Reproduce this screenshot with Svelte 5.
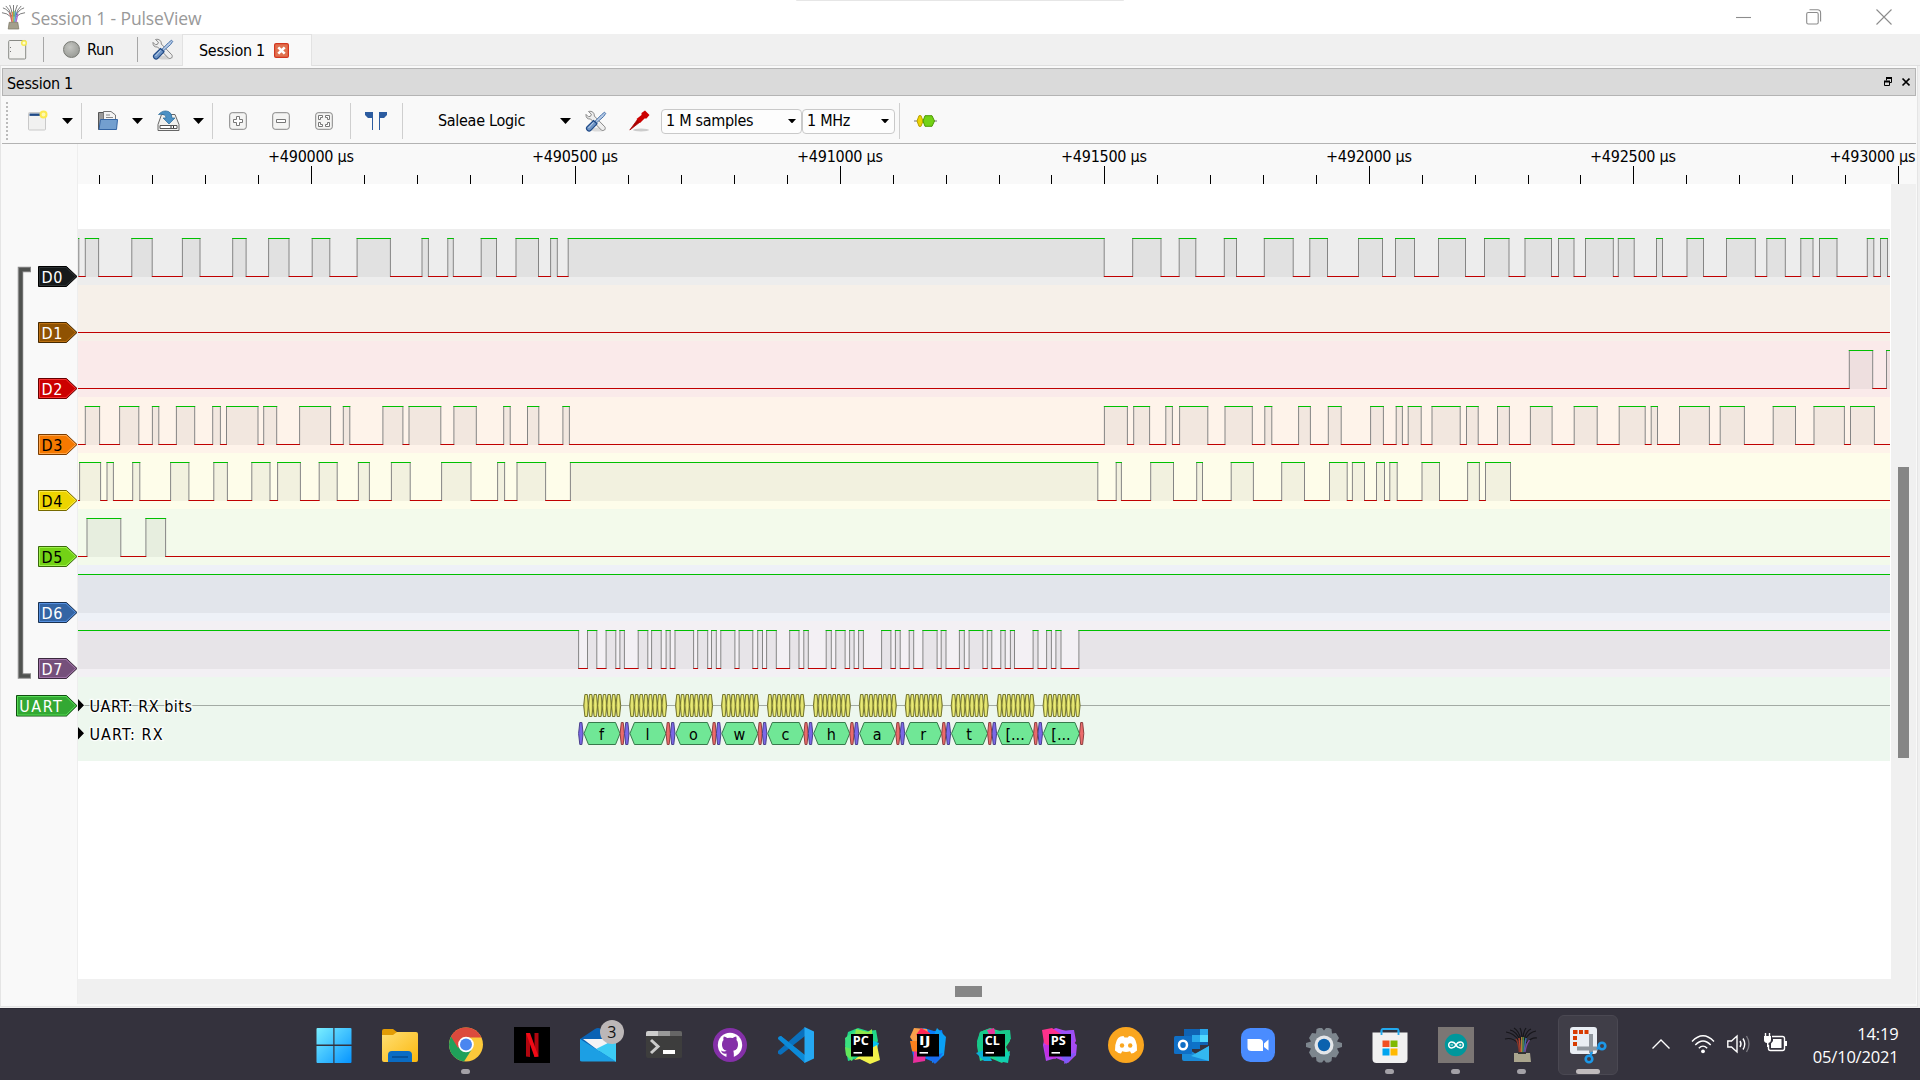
<script>
  // Ruler
  const majors = [0, 1, 2, 3, 4, 5, 6].map((i) => ({
    x: Math.min(Math.floor(311.3 + i * 264.5), 1872.5),
    label: `+${490000 + i * 500} µs`
  }));
  const ticks = Array.from({ length: 35 }, (_, i) => i - 4).map((i) => ({
    x: Math.floor(311.3 + i * 52.9) + 0.5,
    major: i % 5 === 0
  }));

  const END = 1890;

  // Every pair in `high` is a span in which the line is high
  const channels = [
    { name: 'D0', bg: '#ededed', tag: '#16191a', edge: '#000000', light: '#33393b', text: '#fff', high: [[70, 78.8], [85.3, 98.6], [131.8, 152.2], [182.4, 200], [232.7, 246.1], [268.6, 289], [312.2, 329.8], [357.1, 390.4], [422, 428.4], [447.8, 453.3], [481.2, 496.5], [516, 538.5], [550.6, 557.3], [568.2, 1104.2], [1132.7, 1161], [1179.2, 1195.8], [1224.3, 1236.5], [1264.3, 1293.2], [1309.8, 1327.5], [1358.5, 1382.5], [1395.5, 1414.5], [1438.5, 1465.5], [1484.5, 1509], [1525, 1551.5], [1558.5, 1574], [1585.5, 1613.3], [1618.3, 1634.2], [1656.5, 1662.5], [1687, 1703.5], [1726.5, 1755.3], [1766.8, 1785.3], [1800.8, 1813], [1819.5, 1837], [1867.3, 1873.8], [1880.5, 1887.5]] },
    { name: 'D1', bg: '#f6f0e9', tag: '#8f5202', edge: '#472900', light: '#c87a18', text: '#fff', high: [] },
    { name: 'D2', bg: '#faeaea', tag: '#cc0000', edge: '#660000', light: '#ff4040', text: '#fff', high: [[1849.3, 1872.7], [1886.5, 1900]] },
    { name: 'D3', bg: '#fef3ea', tag: '#f57900', edge: '#7a3c00', light: '#ffb060', text: '#000', high: [[85.3, 99.6], [119.6, 138.8], [152.4, 158.8], [176.4, 194.7], [212.7, 220.4], [226.5, 258], [263.7, 276.7], [299.6, 330.6], [343.3, 349.8], [382.9, 402.9], [409, 440.8], [453.9, 476.3], [503.7, 510.2], [527.5, 538.8], [562.9, 569.4], [1104.4, 1127.4], [1133.7, 1149.6], [1165.8, 1172.4], [1179.6, 1207.8], [1225, 1252.3], [1264.8, 1271.8], [1298.6, 1310.4], [1328.3, 1341.2], [1370.6, 1383.4], [1396.2, 1402.4], [1408.2, 1421.2], [1432, 1460.2], [1466.5, 1478.2], [1497.5, 1509.4], [1530.4, 1552.1], [1574.2, 1597.2], [1619.2, 1645.2], [1651.2, 1657.5], [1679.5, 1709.4], [1720.2, 1744.4], [1773.2, 1795.5], [1814, 1844.4], [1850.5, 1874.4]] },
    { name: 'D4', bg: '#fefdea', tag: '#edd400', edge: '#766a00', light: '#fff05a', text: '#000', high: [[79.6, 100.6], [107, 113.4], [132.7, 139.8], [170.6, 188.9], [213.8, 227.4], [251.8, 270], [277.6, 300.4], [319.2, 337.2], [358.4, 369.4], [391.4, 410.2], [441.6, 471], [497.6, 504.6], [517, 545.6], [570.4, 1097.8], [1116.2, 1121.4], [1150.7, 1173.5], [1196.7, 1202.5], [1231.2, 1253.4], [1281.7, 1304.5], [1329.5, 1347.2], [1352.4, 1364.5], [1376.5, 1384.5], [1389.8, 1397.2], [1422, 1439.5], [1467.6, 1479.4], [1485.5, 1510.5]] },
    { name: 'D5', bg: '#f3faeb', tag: '#73d216', edge: '#39690b', light: '#a8f85a', text: '#000', high: [[87, 120.8], [145.9, 165.6]] },
    { name: 'D6', bg: '#eef1f7', tag: '#3465a4', edge: '#1a3252', light: '#5e9cf0', text: '#fff', high: [[70, 1900]] },
    { name: 'D7', bg: '#f3f0f4', tag: '#75507b', edge: '#3a283d', light: '#ae80b6', text: '#fff', high: [[70, 578.6], [587.5, 596.8], [606.1, 615.8], [619.9, 624.4], [638.2, 647.8], [651.6, 661.2], [666.1, 670.2], [675, 693.6], [697.7, 707.7], [711.5, 716.3], [720.8, 734.9], [739.1, 752.8], [757.7, 762.5], [766.6, 776.3], [789.7, 799], [803.8, 808.3], [826.2, 831.3], [835.8, 845.1], [849.6, 854.1], [858.6, 863.4], [881.6, 890.9], [895.4, 900.2], [909.2, 913.7], [922.9, 937.1], [941.2, 946], [959.4, 964.3], [969.1, 982.9], [987.3, 991.8], [1000.8, 1005.2], [1010.4, 1014.5], [1033.1, 1038], [1046.6, 1051.4], [1055.9, 1061], [1078.9, 1900]] }
  ].map((c, i) => {
    const top = 229 + i * 56;
    const low = [];
    let x = 78;
    for (const [a, b] of c.high) {
      if (a > x) low.push([x, a]);
      x = b;
    }
    if (x < END) low.push([x, END]);
    return { ...c, top, low };
  });

  const frames = ['f', 'l', 'o', 'w', 'c', 'h', 'a', 'r', 't', '[...', '[...'].map((t, i) => ({ t, x: 583.4 + i * 45.94 }));
  const bits = [0, 1, 2, 3, 4, 5, 6, 7];

  function hex(x, y, w, h, c) {
    return `${x},${y + h / 2} ${x + c},${y} ${x + w - c},${y} ${x + w},${y + h / 2} ${x + w - c},${y + h} ${x + c},${y + h}`;
  }

  const apps = ['start', 'files', 'chrome', 'netflix', 'mail', 'terminal', 'github', 'vscode', 'pycharm', 'idea', 'clion', 'phpstorm', 'discord', 'outlook', 'zoom', 'settings', 'store', 'arduino', 'pulseview', 'snip'];
  const running = ['chrome', 'store', 'arduino', 'pulseview'];
  const ides = {
    pycharm: { t: 'PC', w: 16, base: '#21d789', polys: [['1,11 13,2 20,10 8,34 2,28', '#3be080'], ['12,2 24,5 28,2 28,14 10,14', '#8ee84a'], ['24,12 35,16 32,24 24,24', '#07c3f2'], ['10,33 22,24 33,18 36,33 26,37 16,32', '#f2f24a'], ['1,20 8,22 8,34 2,28', '#62e65a']] },
    idea: { t: 'IJ', w: 12, base: '#087cfa', polys: [['4,1 17,2 20,12 4,16 0,10', '#f9a04a'], ['11,1 20,6 20,14 6,8', '#fe2857'], ['27,1 36,10 34,28 22,36 24,8', '#0aa0f5'], ['0,14 8,14 14,30 2,24', '#fc801d'], ['4,24 16,27 15,34 3,36', '#e82e9c'], ['18,30 33,26 25,37', '#1b6cf0']] },
    clion: { t: 'CL', w: 15, base: '#21d789', polys: [['1,14 4,5 12,2 12,20 2,26', '#16c98a'], ['11,3 18,1 20,8 14,10', '#e8389c'], ['20,4 34,3 35,12 27,18 18,8', '#18c98c'], ['0,26 10,22 16,34 8,34', '#0ab0d8'], ['18,30 34,24 32,36 22,34', '#10d0b0']] },
    phpstorm: { t: 'PS', w: 15, base: '#b345f1', polys: [['0,3 10,1 20,8 10,22 2,16', '#ff318c'], ['18,4 32,3 32,14 24,14', '#9a50f5'], ['28,12 35,18 34,28 22,37 26,16', '#a64cf5'], ['2,18 10,18 14,32 4,30', '#c030e0'], ['18,28 34,26 24,37', '#7a5cf8']] }
  };
</script>

{#snippet tools()}
  <svg width="22" height="22" viewBox="0 0 22 22">
    <ellipse cx="13" cy="19.5" rx="8" ry="2" fill="#000" opacity=".12" />
    <path d="M3.5 1.5 6.4 4.2 5.6 6.2 3.4 6.8 1 4.4C.8 7.600 2.400 9.300 5.600 9L16.500 20.200C18.500 21.400 21.400 19 19.800 16.800L9.300 6C9.600 2.800 7 .6 3.500 1.500Z" fill="#eee" stroke="#888" />
    <path d="M19.500 2.200 20.700 3.400 18.600 6.500 11.800 12.600 10.200 11.100 16.500 4.700Z" fill="#b8cbe6" stroke="#3465a4" stroke-width=".9" />
    <path d="M8.500 10.500 12 13.800 5.800 20.300C3.500 22.300.2 19.200 2 16.800Z" fill="#6f95c6" stroke="#204a87" stroke-width="1.200" />
    <path d="M8.500 12.500 3.500 18" stroke="#c5d6ec" stroke-width="1" />
  </svg>
{/snippet}

{#snippet arrow(big)}
  <svg class={big ? 'arrow' : 'arrow small'} viewBox="0 0 11 6"><path d="M0 0H11L5.500 6Z" /></svg>
{/snippet}

{#snippet probe()}
  <svg width="26" height="26" viewBox="0 0 26 26">
    <g fill="none" stroke="#555" stroke-width=".8">
      <path d="M11 12Q8 5 2 3M11 12Q9 4 5 1M12 12Q11 4 9 0M13 12V0M14 12Q15 4 17 0M15 12Q17 4 21 1M15 12Q18 5 24 3M11 13Q6 8 1 8M15 13Q20 8 25 8" />
    </g>
    <g fill="none" stroke-width="1.400">
      <path d="M11.500 18Q10.500 12 9 8" stroke="#c66" /><path d="M12.500 18 12 7" stroke="#e84" />
      <path d="M13.500 18V6" stroke="#6b6" /><path d="M14.500 18 15.500 7" stroke="#59d" /><path d="M15.500 18 17.500 9" stroke="#a6c" />
    </g>
    <path d="M8.500 18H17.500L18.500 25H7.500Z" fill="#a39f8c" stroke="#77735f" stroke-width=".7" />
  </svg>
{/snippet}

<div class="screen">
  <header class="titlebar">
    <span class="app-icon">{@render probe()}</span>
    <span class="title">Session 1 - PulseView</span>
    <div class="peek"></div>
    <div class="window-buttons">
      <svg width="16" height="16" viewBox="0 0 16 16"><path d="M0 8.500H15" /></svg>
      <svg width="16" height="16" viewBox="0 0 16 16"><rect x=".7" y="3.500" width="11.500" height="11.500" rx="1.500" /><path d="M3.500 .8H11.500Q14.600.8 14.600 4V12.500" /></svg>
      <svg width="16" height="16" viewBox="0 0 16 16"><path d="M.5.5 15.500 15.500M15.500.5.5 15.500" /></svg>
    </div>
  </header>

  <nav class="tabs">
    <svg class="new" width="20" height="22" viewBox="0 0 20 22"><rect x=".7" y="2.500" width="17" height="18.500" rx="1" fill="#f2f2f0" stroke="#888a85" /><path d="M2.500 9v1M2.500 13v1" stroke="#777" /><circle cx="16" cy="5" r="2.300" fill="#fffbd0" stroke="#f5ea50" stroke-width="1.500" /></svg>
    <i class="vline"></i>
    <div class="run"><i class="ball"></i><span>Run</span></div>
    <i class="vline second"></i>
    <span class="tool">{@render tools()}</span>
    <div class="tab">
      <span>Session 1</span>
      <svg width="15" height="15" viewBox="0 0 15 15"><rect x=".6" y=".6" width="13.800" height="13.800" rx="1.500" fill="#e0714f" stroke="#d4361e" stroke-width="1.200" /><path d="M4.300 4.300 10.700 10.700M10.700 4.300 4.300 10.700" stroke="#fff" stroke-width="2.600" /></svg>
    </div>
  </nav>

  <main class="body">
    <div class="dock">
      <span>Session 1</span>
      <svg width="26" height="10" viewBox="0 0 26 10">
        <path d="M2.500 3.500V1H7.500V5.500H5.500M.5 4.500H5.500V8.500H.5Z" fill="none" stroke="#000" /><path d="M2 1H8M0 4.500H6" stroke="#000" stroke-width="2" />
        <path d="M18.500 1.500 25.500 8.500M25.500 1.500 18.500 8.500" stroke="#000" stroke-width="1.700" />
      </svg>
    </div>

    <div class="toolbar">
      <i class="grip"></i>
      <svg class="i-new" width="20" height="22" viewBox="0 0 20 22"><rect x=".5" y="2.500" width="17" height="17.500" rx="1" fill="#f1f1f0" stroke="#c9c9c9" /><path d="M1.500 4.700H14" stroke="#204a87" stroke-width="2.400" /><circle cx="15.500" cy="4.500" r="3" fill="#fff9b0" stroke="#fce94f" stroke-width="2" /></svg>
      {@render arrow(true)}
      <i class="sep"></i>
      <svg class="i-open" width="22" height="22" viewBox="0 0 22 22"><path d="M1.500 2.500H8V19.500H1.500Z" fill="#999" stroke="#555" /><path d="M6.500 12V1.500H14L18.500 5V12Z" fill="#f4f4f4" stroke="#777" /><path d="M9 5H13M9 7.500H16" stroke="#888" /><path d="M3.500 9.500H20.500L19.500 19.500H2Z" fill="#739fcf" stroke="#3465a4" /></svg>
      {@render arrow(true)}
      <svg class="i-save" width="23" height="22" viewBox="0 0 23 22"><path d="M4.500 4.500H18L22 14.500V20.500H1V14.500Z" fill="#f0f0ee" stroke="#666" /><path d="M3 15.500H20V18.500H3Z" fill="#fff" stroke="#555" /><path d="M14 16V18M16.500 16V18" stroke="#333" /><path d="M1.500 4.500Q6-.500 11.500 1.500 15 3 15 8H18L12 14 6 8H9Q9 3.500 1.500 4.500Z" fill="#4a90c4" stroke="#2a6a9a" stroke-width=".7" /></svg>
      {@render arrow(true)}
      <i class="sep"></i>
      <svg class="zoomer" viewBox="0 0 18 18"><rect class="key" x=".7" y=".7" width="16.600" height="16.600" rx="2.500" /><path d="M7.500 4.500H10.500V7.500H13.500V10.500H10.500V13.500H7.500V10.500H4.500V7.500H7.500Z" /></svg>
      <svg class="zoomer" viewBox="0 0 18 18"><rect class="key" x=".7" y=".7" width="16.600" height="16.600" rx="2.500" /><path d="M4.500 7.500H13.500V10.500H4.500Z" /></svg>
      <svg class="zoomer" viewBox="0 0 18 18"><rect class="key" x=".7" y=".7" width="16.600" height="16.600" rx="2.500" /><path d="M3.500 7.500V3.500H7.500V5.500H5.500V7.500ZM14.500 7.500V3.500H10.500V5.500H12.500V7.500ZM3.500 10.500V14.500H7.500V12.500H5.500V10.500ZM14.500 10.500V14.500H10.500V12.500H12.500V10.500Z" /></svg>
      <i class="sep after-zoom"></i>
      <svg class="flags" width="22" height="18" viewBox="0 0 22 18"><path d="M0 0H8V18H7V6H3L0 3Z M14 0H22V3L19 6H15V18H14Z" fill="#2c5ca0" /></svg>
      <i class="sep after-flags"></i>
      <span class="device">Saleae Logic</span>
      {@render arrow(true)}
      <span class="tool t2">{@render tools()}</span>
      <svg class="probe" width="21" height="22" viewBox="0 0 21 22"><ellipse cx="12" cy="20" rx="8" ry="1.500" fill="#ccc" /><path d="M.8 20 8.500 9.500 11 12Z" fill="#a00" stroke="#a00" stroke-width=".8" /><path d="M7.500 9 12.500 5 12.500 3 16 .5 20.500 5 17.500 8.500H15.500L11 13Z" fill="#c00" /></svg>
      <div class="combo samples"><span>1 M samples</span>{@render arrow(false)}</div>
      <div class="combo rate"><span>1 MHz</span>{@render arrow(false)}</div>
      <i class="sep after-rate"></i>
      <svg class="decoder" width="23" height="12" viewBox="0 0 23 12"><path d="M0 6H23" stroke="#777" /><path d="M3 6 5 .7H7L9 6 7 11.300H5Z" fill="#edd400" stroke="#b8a000" /><path d="M9 6 11 .7H18L20.500 6 18 11.300H11Z" fill="#73d216" stroke="#4e9a06" /></svg>
    </div>

    <div class="view">
      <svg class="headers" width="76" height="860" viewBox="2 144 76 860">
        <path d="M31 269.500H20.500V676H31" fill="none" stroke="#8a8a8a" stroke-width="5.500" />
        <path d="M30 269.500H20.800V676H30" fill="none" stroke="#505250" stroke-width="3.400" />
        {#each channels as c}
          <path d="M38.500 {c.top + 37.500}H66.500L77 {c.top + 47.500} 66.500 {c.top + 57.500}H38.500Z" fill={c.tag} stroke={c.edge} />
          <path d="M39.500 {c.top + 38.500}H66L75.500 {c.top + 47.500} 66 {c.top + 56.500}H39.500Z" fill="none" stroke={c.light} stroke-width=".8" />
          <text x="41.500" y={c.top + 53.500} fill={c.text} textLength="21">{c.name}</text>
        {/each}
        <path d="M16.500 695.500H66.500L77 705.700 66.500 716H16.500Z" fill="#33a833" stroke="#105010" />
        <path d="M17.500 696.500H66L75.500 705.700 66 715H17.500Z" fill="none" stroke="#60e860" stroke-width=".8" />
        <text x="19.300" y="711.500" fill="#fff" textLength="42.500">UART</text>
      </svg>

      <div class="right">
        <svg class="ruler" width="1838" height="40" viewBox="78 144 1838 40">
          {#each majors as m}<text x={m.x} y="162" text-anchor="middle" textLength="86">{m.label}</text>{/each}
          {#each ticks as t}<path d="M{t.x} {t.major ? 166 : 175}V184" stroke="#000" />{/each}
        </svg>
        <div class="scroll-area">
          <svg class="canvas" width="1813" height="795" viewBox="78 184 1813 795">
            <defs>
              <linearGradient id="bit" x1="0" x2="1"><stop offset="0" stop-color="#b5b64e" /><stop offset=".5" stop-color="#f0f17a" /><stop offset="1" stop-color="#b5b64e" /></linearGradient>
            </defs>
            {#each channels as c}
              <rect x="78" y={c.top} width="1812" height="56" fill={c.bg} />
              {#each c.high as [a, b]}
                <rect x={a} y={c.top + 9} width={Math.min(b, END) - a} height="39" fill="#000" opacity=".048" />
                {#if a > 78}<path class="edge" d="M{a} {c.top + 9}V{c.top + 48}" />{/if}
                {#if b < END}<path class="edge" d="M{b} {c.top + 9}V{c.top + 48}" />{/if}
              {/each}
              {#each c.high as [a, b]}
                <path d="M{a - 0.500} {c.top + 9.500}H{Math.min(b + 0.500, END)}" stroke="#00c000" />
              {/each}
              {#each c.low as [a, b]}
                <path d="M{a - 0.300} {c.top + 47.500}H{Math.min(b + 0.300, END)}" stroke="#c00000" />
              {/each}
            {/each}

            <rect x="78" y="677" width="1812" height="84" fill="#edf7ee" />
            <path d="M78 705.500H1890" stroke="#a3aba4" />
            {#each frames as f}
              {#each bits as b}
                <polygon points={hex(f.x + 0.300 + b * 4.600, 694.500, 4.800, 22, 1.200)} fill="url(#bit)" stroke="#74752f" />
              {/each}
              <polygon points={hex(f.x - 4.800, 722.500, 4.500, 22, 1.200)} fill="#7b68e8" stroke="#4a408c" />
              <polygon points={hex(f.x + 0.600, 722.500, 36, 22, 4.500)} fill="#70e796" stroke="#387a4c" />
              <polygon points={hex(f.x + 36.700, 722.500, 4.300, 22, 1.200)} fill="#ec6b6b" stroke="#8c4040" />
              <text x={f.x + 18.200} y="739.500" text-anchor="middle">{f.t}</text>
            {/each}
            <path d="M78 699 84 705.300 78 711.500ZM78 727 84 733.300 78 739.500Z" fill="#000" stroke="#fff" stroke-width="1" paint-order="stroke" />
            <text class="halo" x="89.500" y="711.500" textLength="102.500">UART: RX bits</text>
            <text class="halo" x="89.500" y="739.500" textLength="73">UART: RX</text>
          </svg>
          <div class="vbar"><i></i></div>
        </div>
        <div class="hbar"><i></i></div>
      </div>
    </div>
  </main>

  <footer class="taskbar">
    <div class="apps">
      {#each apps as a}
        <div class="app" class:active={a === 'snip'}>
          <svg width="36" height="36" viewBox="0 0 36 36">
            {#if a === 'start'}
              <defs><linearGradient id="win" gradientUnits="userSpaceOnUse" x1="0" y1="0" x2="36" y2="36"><stop offset="0" stop-color="#7df1ff" /><stop offset="1" stop-color="#0593ff" /></linearGradient></defs>
              <path d="M1.500 1H17.300V17.500H.5V2Q.5 1 1.500 1ZM18.500 1H34.500Q35.500 1 35.500 2V17.500H18.500ZM.5 19H17.300V36H1.500Q.5 36 .5 35ZM18.500 19H35.500V35Q35.500 36 34.500 36H18.500Z" fill="url(#win)" />
            {:else if a === 'files'}
              <defs><linearGradient id="fold" x2="1" y2="1"><stop offset="0" stop-color="#ffdf73" /><stop offset="1" stop-color="#fbb80f" /></linearGradient></defs>
              <path d="M0 4Q0 2 2 2H11L15 5V12H0Z" fill="#e29c05" /><path d="M0 8H11L15 5H34Q36 5 36 7V33Q36 35 34 35H2Q0 35 0 33Z" fill="url(#fold)" />
              <path d="M6 35V28Q6 24 10 24H26Q30 24 30 28V35Z" fill="#0a6cc4" /><path d="M10 30H26" stroke="#064a8c" stroke-width="1.500" />
            {:else if a === 'chrome'}
              <circle cx="18" cy="17.500" r="17" fill="#fbc93a" /><path d="M18 17.500 3 9.500A17 17 0 0 0 16 34.400L24 22Z" fill="#1fa05a" /><path d="M3 9.500A17 17 0 0 1 33.500 10.500H18L10 21Z" fill="#dc4a3d" />
              <circle cx="18" cy="17.500" r="7.800" fill="#fff" /><circle cx="18" cy="17.500" r="6" fill="#4a86f0" />
            {:else if a === 'netflix'}
              <path d="M0 0H36V36H0Z" fill="#000" /><path d="M12 6H16V30L12 29.500ZM20.500 6H24.500V29.500L20.500 30Z" fill="#b1060f" /><path d="M12 6H16L24.500 29.500 20.500 30Z" fill="#f10a16" />
            {:else if a === 'mail'}
              <path d="M0 12 15 2Q18 0 21 2L36 12V34H0Z" fill="#0a62b4" /><path d="M3 12H33L19 24Z" fill="#f3f3f5" /><path d="M36 12 16 22 36 35Z" fill="#3ccbf4" /><path d="M0 12V33Q0 34.500 2 34.500H36Z" fill="#1c9fe4" />
            {:else if a === 'terminal'}
              <path d="M0 6Q0 4 2 4H36V30Q36 31 34 31H2Q0 31 0 29Z" fill="#3d3d3d" /><path d="M0 9V6Q0 4 2 4H12V9Z" fill="#ccc" /><path d="M12 4H24V9H12Z" fill="#999" /><path d="M24 4H34Q36 4 36 6V9H24Z" fill="#666" /><path d="M5 13 12 19.500 5 26" fill="none" stroke="#ccc" stroke-width="3" /><path d="M17 25H29" stroke="#fff" stroke-width="4" />
            {:else if a === 'github'}
              <circle cx="18" cy="18" r="17" fill="#8430a8" /><circle cx="18" cy="18" r="12.200" fill="#fff" />
              <path d="M14.500 31V26.500Q10.500 27.500 9 23.500 12 25.500 14.700 23.800 9.500 22.500 10 17 10 14.500 11.500 13 11 11 11.800 9.500 13.500 9.600 15.300 11 18 10.300 20.700 11 22.500 9.600 24.200 9.500 25 11 24.500 13 26 14.500 26 17 26.500 22.500 21.300 23.800 22 25 21.800 31Z" fill="#8430a8" />
            {:else if a === 'vscode'}
              <path d="M0 11 3 9 27 29V36Z" fill="#0a78c6" /><path d="M27 0V9L4 27Q2 28.500 0 26.500V24Z" fill="#0a70bd" /><path d="M0 12Q0 9 3 9L27 28V36Z" fill="#0c8ad8" /><path d="M26.500 0 36 4.500V31.500L26.500 36Z" fill="#25a8f2" />
            {:else if a in ides}
              <path d="M4 5 14 1 24 4 32 3 34 14 30 20 34 28 26 36 14 31 4 34 1 18Z" fill={ides[a].base} />
              {#each ides[a].polys as [p, f]}<polygon points={p} fill={f} />{/each}
              <rect x="7" y="7" width="22" height="22.500" fill="#000" /><text class="ide" x="8.800" y="18.300" textLength={ides[a].w} lengthAdjust="spacingAndGlyphs">{ides[a].t}</text><path d="M9.500 25.800H18" stroke="#fff" stroke-width="1.600" />
            {:else if a === 'discord'}
              <circle cx="18" cy="18" r="18" fill="#faa61f" /><path d="M12.500 9.500 15.500 9 16.500 10.500H19.800L21 9 23.800 9.500Q26.500 10.500 27.500 13.500 29.500 18 29 23.500 26.500 26 23.300 26.500L22 24.300Q18 25.500 14.200 24.300L13 26.500Q9.500 26 7 23.500 6.700 18 8.700 13.500 9.800 10.500 12.500 9.500Z" fill="#fff" /><circle cx="14" cy="18.500" r="2.200" fill="#faa61f" /><circle cx="22.200" cy="18.500" r="2.200" fill="#faa61f" />
            {:else if a === 'outlook'}
              <path d="M10 2H34V18H10Z" fill="#0f63b4" /><path d="M18 8H26V15H18Z" fill="#28a8ea" /><path d="M26 2H34V8H26Z" fill="#2aa6ea" /><path d="M26 8H34V15H26Z" fill="#50d9ff" /><path d="M18 15H26V22H18Z" fill="#0d72c8" /><path d="M8 18 22 27 35 19V34H10Q8 34 8 32Z" fill="#1a8ad8" /><path d="M35 19 17 29 35 34Z" fill="#33b8f0" /><rect y="9" width="18" height="18" rx="1.500" fill="#0f6fc6" /><ellipse cx="9" cy="18" rx="4" ry="4.300" fill="none" stroke="#fff" stroke-width="2.500" />
            {:else if a === 'zoom'}
              <rect x="1" y="1" width="34" height="34" rx="9.500" fill="#4a8cff" /><path d="M7.500 12H19Q23 12 23 15.500V24H11.500Q7.500 24 7.500 20.500ZM24 16.500 28.500 12.500V23.500L24 20Z" fill="#fff" />
            {:else if a === 'settings'}
              <path d="M13 1H16L18 3.500 20 1H23L25.500 2 26 6.500 30 6 33 11 31 14.500 36 16V20L31 21.500 33 25.500 30 30.500 26 30 25.500 34 23 35.500H20L18 33 16 35.500H13L10.500 34 10 30 6 30.500 3 25.500 5 21.500 0 20V16L5 14.500 3 11 6 6 10 6.500 10.500 2Z" fill="#7d868e" /><circle cx="18" cy="18" r="9.500" fill="#e4e6e9" /><circle cx="18" cy="18" r="6.200" fill="#0c62ae" />
            {:else if a === 'store'}
              <path d="M9.500 9V3.500Q9.500 2 11 2H25Q26.500 2 26.500 3.500V9" fill="none" stroke="#22a9ee" stroke-width="1.800" /><path d="M.5 5.500H35.500V32Q35.500 36 31.500 36H4.500Q.5 36 .5 32Z" fill="#f1f1f1" /><path d="M9.500 8V3.500M26.500 8V3.500" stroke="#22a9ee" stroke-width="1.800" /><path d="M10.500 13.500H17.500V20H10.500Z" fill="#f25022" /><path d="M18.500 13.500H25.500V20H18.500Z" fill="#7fba00" /><path d="M10.500 21.500H17.500V28.500H10.500Z" fill="#00a4ef" /><path d="M18.500 21.500H25.500V28.500H18.500Z" fill="#ffb900" />
            {:else if a === 'arduino'}
              <path d="M0 0H36V36H0Z" fill="#7b7674" /><circle cx="18" cy="18" r="11.200" fill="#00979c" /><path d="M18 18C16 14.300 10.700 14 10.700 18S16 21.700 18 18 25.300 14 25.300 18 20 21.700 18 18Z" fill="none" stroke="#fff" stroke-width="1.500" /><path d="M12.500 18H15M21 18H23.500M22.200 16.800V19.200" stroke="#fff" stroke-width=".8" />
            {:else if a === 'pulseview'}
              <path d="M15 14Q10 6 2 5M16 13Q12 4 6 3M17 13Q15 4 10 1M18 13Q18 5 16 1M19 13Q19 5 22 1M20 13Q22 4 27 2M21 13Q25 5 32 4M14 16Q8 10 1 12M22 16Q28 10 33 11" fill="none" stroke="#17161b" stroke-width="1.200" />
              <g fill="none" stroke-width="1.400"><path d="M15.500 26Q14.500 16 12 12" stroke="#8a3528" /><path d="M16.700 26 15 11" stroke="#b8442e" /><path d="M17.800 26V10" stroke="#c08a38" /><path d="M18.800 26 19.500 10" stroke="#4a8a50" /><path d="M19.800 26 22 11" stroke="#3a70b0" /><path d="M20.800 26Q22 17 25.500 13" stroke="#7a4a9a" /></g>
              <path d="M10 26H26L27 35H10Z" fill="#aaa58e" /><path d="M14 25H22V27H14Z" fill="#333" />
            {:else}
              <rect y="0" width="27" height="27" rx="3" fill="#e9eef4" /><path d="M3 3H7.500V7H3ZM9 3H13V7H9ZM14.500 3H18.500V7H14.500ZM3 9H7V13H3ZM3 15H7V19H3Z" fill="#d83b01" /><path d="M21 7V26M7 21.500H28" stroke="#8f969e" stroke-width="4" /><circle cx="32" cy="19" r="3.300" fill="none" stroke="#1c98e8" stroke-width="2.600" /><circle cx="19" cy="32" r="3.300" fill="none" stroke="#1c98e8" stroke-width="2.600" /><path d="M20 29 22 25M27 22 30 20" stroke="#1c98e8" stroke-width="2.500" />
            {/if}
          </svg>
          {#if a === 'mail'}<b class="badge">3</b>{/if}
          {#if running.includes(a)}<i class="dot"></i>{/if}
          {#if a === 'snip'}<i class="dot wide"></i>{/if}
        </div>
      {/each}
    </div>
    <div class="tray">
      <svg width="18" height="10" viewBox="0 0 18 10"><path d="M.5 9.500 9 1 17.500 9.500" /></svg>
      <svg class="wifi" width="24" height="20" viewBox="0 0 24 20"><path d="M1 7.500Q12-4 23 7.500M4.300 11Q12 3 19.700 11M7.800 14.300Q12 10 16.200 14.300" stroke-width="1.900" /><circle cx="12" cy="17.300" r="1.900" class="solid" /></svg>
      <svg class="sound" width="25" height="20" viewBox="0 0 25 20"><path d="M.8 7V13H4.500L10 18V2L4.500 7Z" stroke-width="1.700" /><path d="M13 7Q15 10 13 13M16 4.500Q19.500 10 16 15.500" stroke-width="1.700" /><path d="M19.500 2Q24.500 10 19.500 18" opacity=".35" stroke-width="1.500" /></svg>
      <svg class="power" width="25" height="20" viewBox="0 0 25 20"><path d="M9 3.500H19.500Q21.500 3.500 21.500 5.500V15.500Q21.500 17.500 19.500 17.500H7.500Q5.500 17.500 5.500 15.500V12" stroke-width="1.700" /><path class="solid" d="M10 6H18.500V15H8V10.500L10 8ZM22 8H24V13H22ZM1 3H8V7Q8 9.500 5.500 10V14H4V10Q1 9.500 1 7Z" /><path d="M2.500 0V4M6.500 0V4" stroke-width="1.500" /></svg>
      <div class="clock"><span class="time">14:19</span><span class="date">05/10/2021</span></div>
    </div>
  </footer>
</div>

<style>
  :global(body) { margin: 0; overflow: hidden; }
  .screen { width: 1920px; height: 1080px; display: flex; flex-direction: column; background: #f0f0f0; font: 16px/20px 'DejaVu Sans Condensed', 'Noto Sans', sans-serif; letter-spacing: -0.3px; color: #000; overflow: hidden; }
  svg { display: block; flex: none; }
  svg text { font: 16px 'DejaVu Sans Condensed', 'Noto Sans', sans-serif; letter-spacing: 0; }

  .titlebar { height: 34px; flex: none; background: #fff; display: flex; align-items: center; position: relative; }
  .app-icon { margin: 0 4px 0 1px; }
  .app-icon svg { width: 25px; height: 25px; }
  .title { font: 17.5px/24px 'Open Sans', 'Noto Sans', sans-serif; color: #999; letter-spacing: -0.13px; margin: 1px 0 0 1px; white-space: nowrap; }
  .peek { position: absolute; left: 796px; top: 0; width: 328px; height: 1px; background: #e6e6e6; border-radius: 0 0 8px 8px; }
  .window-buttons { margin-left: auto; display: flex; gap: 54px; padding-right: 28px; }
  .window-buttons path, .window-buttons rect { fill: none; stroke: #8c8c8c; stroke-width: 1.1; }

  .tabs { height: 31px; flex: none; display: flex; align-items: center; background: #f0f0f0; border-bottom: 1px solid #e0e0e0; }
  .new { margin: -2px 0 0 8px; }
  .vline { width: 1px; height: 25px; background: #a6a6a6; margin-left: 15px; }
  .run { display: flex; align-items: center; gap: 7px; width: 75px; padding-left: 19px; }
  .run span { padding-top: 1px; }
  .ball { width: 15px; height: 15px; border-radius: 50%; border: 1px solid #777973; background: radial-gradient(circle at 40% 35%, #c5c6c2, #8e908b); }
  .vline.second { margin-left: -1px; }
  .tool { margin-left: 14px; }
  .tool svg { margin-top: -1px; }
  .tab { box-sizing: border-box; width: 130px; height: 32px; margin: 0 0 -1px 8px; padding: 1px 0 0 16px; background: #f9f9f9; border: 1px solid #e2e2e2; border-bottom: 0; display: flex; align-items: center; gap: 9px; white-space: nowrap; }
  .tab svg { margin-top: -1px; }

  .body { box-sizing: border-box; width: 1918px; height: 941px; flex: none; padding: 2px 1px 0 1px; border: 1px solid #e5e5e5; border-top: 0; background: #f9f9f9; margin-bottom: 1px; display: flex; flex-direction: column; }
  .dock { box-sizing: border-box; height: 28px; flex: none; background: #dadada; border: 1px solid #b4b4b4; display: flex; align-items: center; justify-content: space-between; padding: 3px 5px 0 4px; }
  .dock svg { margin-top: -4px; }
  .toolbar { box-sizing: border-box; height: 48px; flex: none; border-bottom: 1px solid #b3b3b3; padding: 3px 0 0 1px; display: flex; align-items: center; white-space: nowrap; }
  .grip { width: 2px; height: 38px; margin-left: 3px; background: repeating-linear-gradient(#bbb 0 2px, transparent 2px 4px); }
  .i-new { margin-left: 20px; }
  .arrow { width: 11px; height: 6px; }
  .arrow.small { width: 8px; height: 4.5px; }
  .i-new + .arrow { margin-left: 14px; }
  .sep { width: 1px; height: 36px; background: #cfcfcf; flex: none; margin-left: 8px; }
  .i-open { margin-left: 15px; }
  .i-open + .arrow { margin-left: 13px; }
  .i-save { margin-left: 14px; }
  .i-save + .arrow { margin-left: 13px; }
  .zoomer { width: 18px; height: 18px; margin-left: 25px; }
  .sep + .zoomer { margin-left: 16px; }
  .zoomer path { fill: #fff; stroke: #777; }
  .zoomer .key { fill: #f4f4f3; stroke: #858585; }
  .after-zoom { margin-left: 17px; }
  .flags { margin-left: 14px; }
  .after-flags { margin-left: 15px; }
  .device { margin-left: 35px; width: 122px; }
  .t2 { margin-left: 14px; }
  .probe { margin-left: 22px; }
  .combo { box-sizing: border-box; height: 25px; border: 1px solid #c9c9c9; border-radius: 4px; background: #fdfdfd; display: flex; align-items: center; justify-content: space-between; padding: 0 5px 0 4px; }
  .samples { width: 141px; margin-left: 11px; }
  .rate { width: 93px; }
  .after-rate { margin-left: 4px; }
  .decoder { margin-left: 14px; }

  .view { flex: 1; display: flex; min-height: 0; }
  .headers { background: #f9f9f9; box-shadow: inset -1px 0 #eee; }
  .right { width: 1838px; display: flex; flex-direction: column; }
  .scroll-area { display: flex; height: 795px; flex: none; }
  .canvas { background: #fff; }
  .edge { stroke: #858585; fill: none; }
  .halo { paint-order: stroke; stroke: #fff; stroke-width: 2.5px; stroke-opacity: .8; }
  .vbar { flex: 1; background: #f0f0f0; }
  .vbar i { display: block; width: 11px; height: 291px; margin: 283px 0 0 7px; background: #868686; }
  .hbar { height: 25px; flex: none; background: #f0f0f0; }
  .hbar i { display: block; width: 27px; height: 11px; margin: 7px 0 0 877px; background: #868686; }

  .taskbar { margin-top: auto; height: 72px; flex: none; background: #34323d; border-top: 1px solid #2b2934; box-sizing: border-box; display: flex; align-items: flex-start; color: #fff; }
  .apps { display: flex; padding-left: 300.6px; }
  .app { width: 66.02px; height: 71px; display: flex; justify-content: center; padding-top: 18px; box-sizing: border-box; position: relative; }
  .app svg { overflow: visible; position: relative; }
  .app.active::before { content: ''; position: absolute; left: 3px; top: 6px; width: 58px; height: 58px; border-radius: 6px; background: #403e48; border: 1px solid #4a4852; }
  .dot { position: absolute; left: 28.5px; top: 60px; width: 9px; height: 5px; border-radius: 3px; background: #a3a1a7; }
  .dot.wide { left: 21px; width: 24px; background: #c0bbbd; }
  .badge { position: absolute; left: 35px; top: 11px; width: 24px; height: 24px; border-radius: 50%; background: #bcb7b8; color: #111; font: 16px/24px 'Open Sans', sans-serif; text-align: center; }
  svg .ide { font: bold 12px 'Open Sans', sans-serif; fill: #fff; }
  .tray { display: flex; align-items: flex-start; padding-top: 30px; margin-left: 31.5px; }
  .tray path { fill: none; stroke: #fff; stroke-width: 1.4; }
  .tray .solid { fill: #fff; stroke: none; }
  .wifi { margin: -5px 0 0 21px; }
  .sound { margin: -5px 0 0 12px; }
  .power { margin: -6px 0 0 11px; }
  .clock { width: 110px; margin-top: -17px; display: flex; flex-direction: column; align-items: flex-end; font: 16.5px/23px 'Open Sans', 'Noto Sans', sans-serif; letter-spacing: -0.2px; }
</style>
